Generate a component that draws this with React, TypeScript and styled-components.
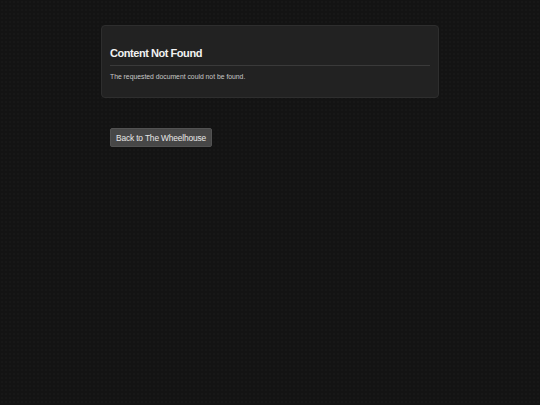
import React from "react";
import styled, { createGlobalStyle } from "styled-components";

const Global = createGlobalStyle`
  html, body {
    margin: 0;
    padding: 0;
    background-color: #131313;
    background-image: radial-gradient(rgba(255,255,255,0.035) 0.6px, transparent 0.8px);
    background-size: 4px 4px;
    min-height: 100%;
  }
  body {
    font-family: "Liberation Sans", Arial, sans-serif;
    color: #e6e6e6;
  }
  #root { min-height: 405px; }
`;

const Page = styled.main`
  max-width: 338px;
  margin: 0 auto;
  padding-top: 25px;
`;

const Card = styled.section`
  background: #222222;
  border: 1px solid #2e2e2e;
  border-radius: 4px;
  padding: 21px 8px 16px;
`;

const Title = styled.h1`
  margin: 0;
  font-size: 11px;
  line-height: 12px;
  letter-spacing: -0.45px;
  font-weight: bold;
  color: #f2f2f2;
  padding-bottom: 6px;
  border-bottom: 1px solid #3a3a3a;
`;

const Message = styled.p`
  margin: 7px 0 0;
  font-size: 6.8px;
  line-height: 8px;
  color: #c8c8c8;
`;

const Actions = styled.div`
  display: flex;
  padding: 30px 9px 0;
`;

const BackButton = styled.button`
  font-family: "Liberation Sans", Arial, sans-serif;
  font-size: 8.4px;
  letter-spacing: -0.15px;
  color: #e8e8e8;
  background: #474747;
  border: 1px solid #525252;
  border-radius: 2px;
  padding: 0 5px;
  height: 19px;
  cursor: pointer;
`;

export default function App() {
  return (
    <>
      <Global />
      <Page>
        <Card>
          <Title>Content Not Found</Title>
          <Message>The requested document could not be found.</Message>
        </Card>
        <Actions>
          <BackButton>Back to The Wheelhouse</BackButton>
        </Actions>
      </Page>
    </>
  );
}
